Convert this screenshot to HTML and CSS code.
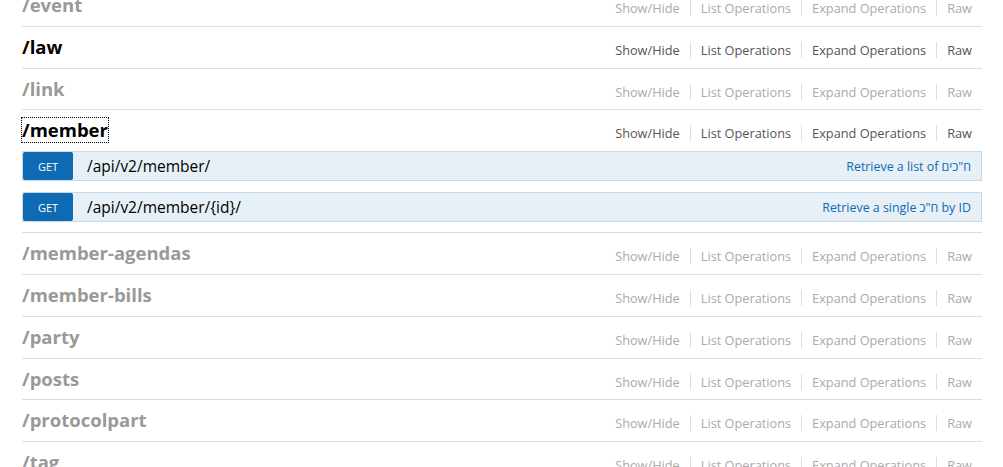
FILE: index.html
```html
<!DOCTYPE html>
<html lang="en">
<head>
<meta charset="utf-8">
<title>API resources</title>
<link rel="stylesheet" href="styles.css">
</head>
<body>
<ul class="resources">
  <li class="resource">
    <div class="heading">
      <h2 class="title"><a>/event</a></h2>
      <ul class="options"><li>Show/Hide</li><li>List Operations</li><li>Expand Operations</li><li>Raw</li></ul>
    </div>
  </li>
  <li class="resource active">
    <div class="heading">
      <h2 class="title"><a>/law</a></h2>
      <ul class="options"><li>Show/Hide</li><li>List Operations</li><li>Expand Operations</li><li>Raw</li></ul>
    </div>
  </li>
  <li class="resource">
    <div class="heading">
      <h2 class="title"><a>/link</a></h2>
      <ul class="options"><li>Show/Hide</li><li>List Operations</li><li>Expand Operations</li><li>Raw</li></ul>
    </div>
  </li>
  <li class="resource active">
    <div class="heading">
      <h2 class="title"><a class="focused">/member</a></h2>
      <ul class="options"><li>Show/Hide</li><li>List Operations</li><li>Expand Operations</li><li>Raw</li></ul>
    </div>
    <ul class="operations">
      <li class="operation">
        <span class="method">GET</span>
        <span class="path">/api/v2/member/</span>
        <span class="summary">Retrieve a list of ח"כים</span>
      </li>
      <li class="operation">
        <span class="method">GET</span>
        <span class="path">/api/v2/member/{id}/</span>
        <span class="summary">Retrieve a single ח"כ by ID</span>
      </li>
    </ul>
  </li>
  <li class="resource">
    <div class="heading">
      <h2 class="title"><a>/member-agendas</a></h2>
      <ul class="options"><li>Show/Hide</li><li>List Operations</li><li>Expand Operations</li><li>Raw</li></ul>
    </div>
  </li>
  <li class="resource">
    <div class="heading">
      <h2 class="title"><a>/member-bills</a></h2>
      <ul class="options"><li>Show/Hide</li><li>List Operations</li><li>Expand Operations</li><li>Raw</li></ul>
    </div>
  </li>
  <li class="resource">
    <div class="heading">
      <h2 class="title"><a>/party</a></h2>
      <ul class="options"><li>Show/Hide</li><li>List Operations</li><li>Expand Operations</li><li>Raw</li></ul>
    </div>
  </li>
  <li class="resource">
    <div class="heading">
      <h2 class="title"><a>/posts</a></h2>
      <ul class="options"><li>Show/Hide</li><li>List Operations</li><li>Expand Operations</li><li>Raw</li></ul>
    </div>
  </li>
  <li class="resource">
    <div class="heading">
      <h2 class="title"><a>/protocolpart</a></h2>
      <ul class="options"><li>Show/Hide</li><li>List Operations</li><li>Expand Operations</li><li>Raw</li></ul>
    </div>
  </li>
  <li class="resource">
    <div class="heading">
      <h2 class="title"><a>/tag</a></h2>
      <ul class="options"><li>Show/Hide</li><li>List Operations</li><li>Expand Operations</li><li>Raw</li></ul>
    </div>
  </li>
</ul>
</body>
</html>
```

FILE: styles.css
```css
html, body {
  margin: 0;
  padding: 0;
  background: #fff;
  overflow: hidden;
}

body {
  font-family: "Open Sans", "DejaVu Sans", sans-serif;
}

.resources {
  list-style: none;
  margin: -15px 0 0 22px;
  padding: 0;
  width: 960px;
}

.resource {
  border-bottom: 1px solid #ddd;
}

.heading {
  display: flex;
  justify-content: space-between;
  height: 40.8px;
}

.title {
  margin: 0;
  padding-top: 8px;
  font-size: 18.5px;
  line-height: 24px;
  font-weight: bold;
  color: #999;
}

.title a {
  display: inline-block;
  color: inherit;
}

.title a.focused {
  outline: 1px dotted #000;
}

.resource.active .title {
  color: #000;
}

.options {
  display: flex;
  list-style: none;
  margin: 0;
  padding: 15px 0 0;
}

.options li {
  padding: 0 10px;
  border-right: 1px solid #ddd;
  font-size: 12.75px;
  line-height: 16px;
  height: 16px;
  color: #aaa;
}

.options li:last-child {
  border-right: 0;
}

.resource.active .options li {
  color: #555;
}

.operations {
  list-style: none;
  margin: 0;
  padding: 0 0 10px;
  display: flex;
  flex-direction: column;
  gap: 11px;
}

.operation {
  height: 30px;
  box-sizing: border-box;
  border: 1px solid #c3d9ec;
  background: #e7f0f7;
  display: flex;
  align-items: center;
}

.method {
  width: 50px;
  height: 28px;
  background: #0f6ab4;
  color: #fff;
  font-size: 11px;
  border-radius: 2px;
  display: flex;
  align-items: center;
  justify-content: center;
}

.path {
  margin-left: 14px;
  flex: 1;
  font-size: 15.5px;
  color: #000;
}

.summary {
  padding-right: 10px;
  font-size: 12.4px;
  color: #0f6ab4;
}
```
